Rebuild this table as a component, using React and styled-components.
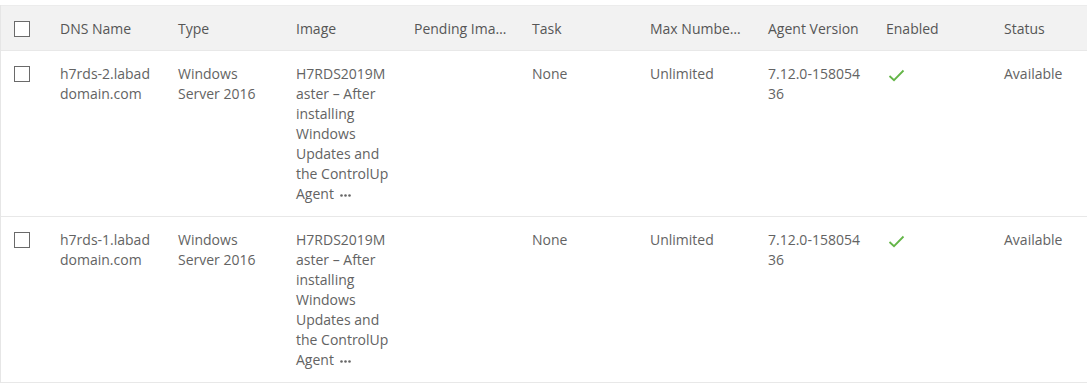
import React from "react";
import styled, { createGlobalStyle } from "styled-components";

const GlobalStyle = createGlobalStyle`
  html, body {
    margin: 0;
    padding: 0;
    background: #fff;
    overflow: hidden;
  }
  body {
    font-family: "Open Sans", "Liberation Sans", sans-serif;
    font-size: 14px;
    color: #616161;
  }
`;

const Table = styled.div`
  margin-top: 5px;
  width: 1112px;
  border-left: 1px solid #e6e6e6;
  box-sizing: border-box;
`;

const Row = styled.div`
  display: grid;
  grid-template-columns: 49px repeat(9, 118px);
  align-items: start;
  background: ${(p) => (p.$head ? "#f2f2f2" : "#fff")};
  border-top: 1px solid ${(p) => (p.$head ? "#ececec" : "transparent")};
  border-bottom: 1px solid #e8e8e8;
  color: ${(p) => (p.$head ? "#565656" : "#636363")};
`;

const Cell = styled.div`
  padding: ${(p) => (p.$clip ? "13px 13px 11px 10px" : "12px 13px 12px 10px")};
  line-height: 20px;
  min-width: 0;
  overflow-wrap: break-word;
  word-break: ${(p) => (p.$breakAll ? "break-all" : "normal")};
  ${(p) =>
    p.$clip &&
    `
    white-space: nowrap;
    overflow: hidden;
    text-overflow: ellipsis;
  `}
`;

const BoxCell = styled.div`
  padding: ${(p) => (p.$head ? "15px 0 11px 13px" : "14px 0 12px 13px")};
`;

const Check = styled.span`
  display: block;
  width: 16px;
  height: 16px;
  box-sizing: border-box;
  border: 1px solid #6a6a6a;
  background: #fff;
`;

const More = styled.svg`
  margin-left: 6px;
  vertical-align: middle;
`;

const Tick = styled.svg`
  display: block;
  margin: 5px 0 0 2px;
`;

const columns = [
  "DNS Name",
  "Type",
  "Image",
  "Pending Image Version",
  "Task",
  "Max Number of Sessions",
  "Agent Version",
  "Enabled",
  "Status",
];

const machines = [
  { dns: "h7rds-2.labaddomain.com" },
  { dns: "h7rds-1.labaddomain.com" },
];

const Dots = () => (
  <More width="11" height="3" viewBox="0 0 11 3">
    <circle cx="1.5" cy="1.5" r="1.3" fill="#666" />
    <circle cx="5.5" cy="1.5" r="1.3" fill="#666" />
    <circle cx="9.5" cy="1.5" r="1.3" fill="#666" />
  </More>
);

const App = () => {
  return (
    <>
      <GlobalStyle />
      <Table>
        <Row $head>
          <BoxCell $head>
            <Check />
          </BoxCell>
          {columns.map((c) => (
            <Cell key={c} $clip>
              {c}
            </Cell>
          ))}
        </Row>
        {machines.map((m) => (
          <Row key={m.dns}>
            <BoxCell>
              <Check />
            </BoxCell>
            <Cell $breakAll>{m.dns}</Cell>
            <Cell>Windows Server 2016</Cell>
            <Cell>
              H7RDS2019Master – After installing Windows Updates and the ControlUp Agent
              <Dots />
            </Cell>
            <Cell />
            <Cell>None</Cell>
            <Cell>Unlimited</Cell>
            <Cell $breakAll>7.12.0-15805436</Cell>
            <Cell>
              <Tick width="17" height="13" viewBox="0 0 17 13">
                <path d="M1.5 7 L6 11.2 L15.5 1.5" fill="none" stroke="#63b547" strokeWidth="1.8" />
              </Tick>
            </Cell>
            <Cell>Available</Cell>
          </Row>
        ))}
      </Table>
    </>
  );
};

export default App;
